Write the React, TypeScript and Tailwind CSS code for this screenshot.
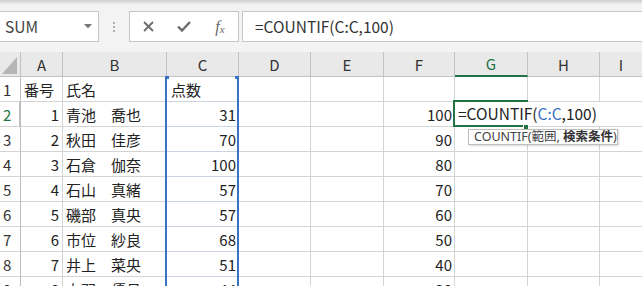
import React from "react";

type Person = { no: number; sei: string; mei: string; score: number; f: number };

const people: Person[] = [
  { no: 1, sei: "青池", mei: "喬也", score: 31, f: 100 },
  { no: 2, sei: "秋田", mei: "佳彦", score: 70, f: 90 },
  { no: 3, sei: "石倉", mei: "伽奈", score: 100, f: 80 },
  { no: 4, sei: "石山", mei: "真緒", score: 57, f: 70 },
  { no: 5, sei: "磯部", mei: "真央", score: 57, f: 60 },
  { no: 6, sei: "市位", mei: "紗良", score: 68, f: 50 },
  { no: 7, sei: "井上", mei: "菜央", score: 51, f: 40 },
  { no: 8, sei: "上羽", mei: "優月", score: 44, f: 30 },
];

const cell = "shrink-0 h-[25px] border-r border-b border-[#d4d4d4] flex items-center bg-white";
const head =
  "shrink-0 h-[25px] border-r border-b border-[#c2c2c2] flex items-center justify-center bg-[#e9e9e9] text-[#333]";

function ColHeaders() {
  const cols = [
    { l: "A", w: "w-[42px]" },
    { l: "B", w: "w-[104px]" },
    { l: "C", w: "w-[72px]" },
    { l: "D", w: "w-[72px]" },
    { l: "E", w: "w-[73px]" },
    { l: "F", w: "w-[71px]" },
  ];
  return (
    <div className="flex text-[15px] leading-none">
      <div className={`${head} w-[21px] items-end justify-end pb-[2px] pr-[2px]`}>
        <svg width="16" height="17" viewBox="0 0 16 17">
          <polygon points="15,0 15,17 0,17" fill="#b5b5b5" />
        </svg>
      </div>
      {cols.map((c) => (
        <div key={c.l} className={`${head} ${c.w}`}>
          {c.l}
        </div>
      ))}
      <div className={`${head} w-[73px] bg-[#d2d2d2] text-[#217346] border-b-2 border-b-[#217346]`}>G</div>
      <div className={`${head} w-[72px]`}>H</div>
      <div className={`${head} flex-1 border-r-0`}>I</div>
    </div>
  );
}

function RowHeader({ n, active }: { n: number; active?: boolean }) {
  return (
    <div
      className={`${cell} w-[21px] pl-[3px] text-[15px] border-r-[#bdbdbd] ${
        active ? "bg-[#d2d2d2] text-[#217346] border-r-2 border-r-[#217346]" : "bg-[#e9e9e9] text-[#333]"
      }`}
    >
      {n}
    </div>
  );
}

function Tail() {
  return (
    <>
      <div className={`${cell} w-[73px]`} />
      <div className={`${cell} w-[72px]`} />
      <div className={`${cell} flex-1 border-r-0`} />
    </>
  );
}

export default function App() {
  return (
    <div className="w-[642px] h-[286px] overflow-hidden bg-[#f3f3f3] font-['Noto_Sans_CJK_JP',sans-serif] text-[#222]">
      <div className="h-[4px] bg-gradient-to-b from-[#d0d0d0] to-[#eaeaea]" />

      {/* formula bar */}
      <div className="h-[48px] flex items-start pt-[7px]">
        <div className="-ml-px w-[100px] h-[31px] bg-white border border-[#c6c6c6] flex items-center pl-[5px] pr-[6px] text-[15.5px] text-[#444] leading-none">
          <span className="flex-1">SUM</span>
          <svg width="8" height="5" viewBox="0 0 8 5">
            <polygon points="0,0 8,0 4,4.5" fill="#777" />
          </svg>
        </div>
        <div className="w-[30px] h-[31px] flex flex-col items-center justify-center gap-[2px]">
          <span className="w-[2px] h-[2px] bg-[#b0b0b0]" />
          <span className="w-[2px] h-[2px] bg-[#b0b0b0]" />
          <span className="w-[2px] h-[2px] bg-[#b0b0b0]" />
        </div>
        <div className="w-[110px] h-[31px] bg-white border border-[#c6c6c6] flex items-center text-[#6b6b6b]">
          <div className="w-[36px] flex justify-center">
            <svg width="11" height="11" viewBox="0 0 11 11">
              <path d="M1 1 L10 10 M10 1 L1 10" stroke="#6b6b6b" strokeWidth="1.8" />
            </svg>
          </div>
          <div className="w-[36px] flex justify-center">
            <svg width="14" height="11" viewBox="0 0 14 11">
              <path d="M1 5.5 L5 9.5 L13 1" stroke="#6b6b6b" strokeWidth="2.4" fill="none" />
            </svg>
          </div>
          <div className="w-[36px] flex justify-center font-['Liberation_Serif',serif] italic text-[#6b6b6b] leading-none">
            <span className="text-[16px]">f</span>
            <span className="text-[11px] mt-[5px]">x</span>
          </div>
        </div>
        <div className="ml-[3px] flex-1 -mr-px h-[31px] bg-white border border-[#c6c6c6] flex items-center pl-[12px] text-[15.5px] text-[#333] leading-none">
          =COUNTIF(C:C,100)
        </div>
      </div>

      {/* sheet */}
      <div className="relative text-[15px] leading-none">
        <ColHeaders />

        <div className="flex">
          <RowHeader n={1} />
          <div className={`${cell} w-[42px] pl-[3px]`}>番号</div>
          <div className={`${cell} w-[104px] pl-[3px]`}>氏名</div>
          <div className={`${cell} w-[72px] pl-[4px] bg-[#e8eff9] border-b-[#c9d3e2]`}>点数</div>
          <div className={`${cell} w-[72px]`} />
          <div className={`${cell} w-[73px]`} />
          <div className={`${cell} w-[71px]`} />
          <Tail />
        </div>

        {people.map((p, i) => (
          <div key={p.no} className="flex">
            <RowHeader n={i + 2} active={i === 0} />
            <div className={`${cell} w-[42px] justify-end pr-[3px]`}>{p.no}</div>
            <div className={`${cell} w-[104px] pl-[3px]`}>
              {p.sei}
              {"\u3000"}
              {p.mei}
            </div>
            <div className={`${cell} w-[72px] justify-end pr-[2px] bg-[#e8eff9] border-b-[#c9d3e2]`}>{p.score}</div>
            <div className={`${cell} w-[72px]`} />
            <div className={`${cell} w-[73px]`} />
            <div className={`${cell} w-[71px] justify-end pr-[2px]`}>{p.f}</div>
            {i === 0 ? (
              <div className={`${cell} flex-1 border-r-0 pl-[3px] text-[15.5px]`}>
                =COUNTIF(<span className="text-[#3a70c6]">C:C</span>,100)
              </div>
            ) : (
              <Tail />
            )}
          </div>
        ))}

        {/* range highlight on column C */}
        <div className="absolute left-[165px] top-[24px] w-[74px] h-[240px] border-x-2 border-[#3a70c6] pointer-events-none" />
        <div className="absolute left-[165px] top-[24px] w-[4px] h-[3px] bg-[#3a70c6]" />
        <div className="absolute left-[235px] top-[24px] w-[4px] h-[3px] bg-[#3a70c6]" />

        {/* active cell G2 */}
        <div className="absolute left-[453px] top-[48px] w-[75px] h-[27px] border-t-2 border-l-2 border-b-2 border-[#217346]" />
        <div className="absolute left-[523px] top-[72px] w-[6px] h-[6px] bg-[#217346] border border-white" />

        {/* function tooltip */}
        <div className="absolute left-[468px] top-[77px] w-[150px] h-[16px] bg-white border border-[#bdbdbd] shadow-[1px_1px_2px_rgba(0,0,0,0.15)] flex items-center pl-[5px] font-['Noto_Sans','Noto_Sans_CJK_JP',sans-serif] text-[12.5px] text-[#444] leading-none whitespace-pre">
          {"COUNTIF(範囲, "}
          <span className="font-bold text-[#333]">検索条件</span>)
        </div>
      </div>
    </div>
  );
}
